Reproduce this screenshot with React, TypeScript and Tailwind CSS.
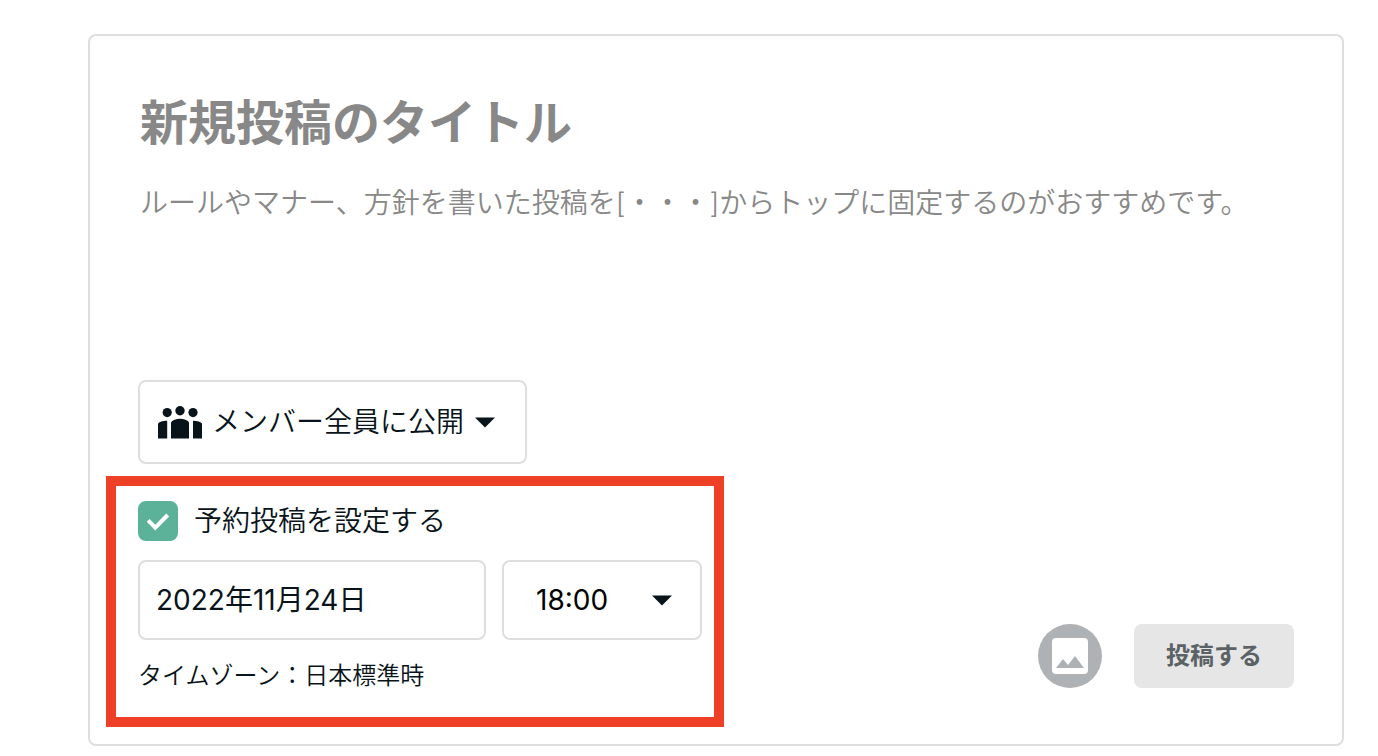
import React, { useState } from 'react';

const Caret = () => (
  <svg viewBox="0 0 20 11" className="w-5 shrink-0 pointer-events-none" aria-hidden="true">
    <path d="M0 0.5h20L10 10.5z" fill="#08131a" />
  </svg>
);

const MembersIcon = () => (
  <svg viewBox="0 0 44 33" className="w-11 shrink-0" fill="#08131a" aria-hidden="true">
    <circle cx="22" cy="4.7" r="4.7" />
    <circle cx="9.2" cy="6.6" r="4.6" />
    <circle cx="35" cy="6.6" r="4.6" />
    <path d="M13 32.4V16.2C14.5 14 18 12.800 22 12.800s7.500 1.200 9 3.400v16.200z" />
    <path d="M0 32.400V17.600c1-1.900 4.600-2.900 9.200-2.900v17.700z" />
    <path d="M35 32.400V14.700c4.600 0 7.800 1 9 2.900v14.800z" />
  </svg>
);

const ImageIcon = () => (
  <svg viewBox="0 0 36 36" className="w-9" aria-hidden="true">
    <rect width="36" height="36" rx="4" fill="#fff" />
    <path d="M4 30l7-9 5 6 7-9 9 12z" fill="#aeb2b5" />
  </svg>
);

const AudienceSelect = () => (
  <div className="relative self-start flex items-center h-21 border-2 border-[#dedede] rounded-lg">
    <div className="absolute left-4.5 pointer-events-none">
      <MembersIcon />
    </div>
    <select
      aria-label="公開範囲"
      className="h-full appearance-none bg-transparent pl-18 pr-15 outline-none"
    >
      <option>メンバー全員に公開</option>
    </select>
    <div className="absolute right-7.5 pointer-events-none">
      <Caret />
    </div>
  </div>
);

const ScheduleSettings = () => {
  const [scheduled, setScheduled] = useState(true);
  const [date, setDate] = useState('2022年11月24日');

  return (
    <div className="-ml-8 border-10 border-[#ed4027] pl-5.5 pr-3 pt-[15px] pb-[21px]">
      <label className="flex items-center gap-4 leading-10">
        <span className="relative flex size-10">
          <input
            type="checkbox"
            checked={scheduled}
            onChange={(e) => setScheduled(e.target.checked)}
            className="peer size-10 appearance-none rounded-lg border-2 border-[#dedede] checked:border-[#5bb299] checked:bg-[#5bb299]"
          />
          <svg
            viewBox="0 0 40 40"
            className="absolute inset-0 hidden pointer-events-none peer-checked:block"
            fill="none"
            stroke="#fff"
            strokeWidth="4"
            aria-hidden="true"
          >
            <path d="M10.200 19.400l7.100 7.200L29.700 14" />
          </svg>
        </span>
        <span>予約投稿を設定する</span>
      </label>
      <div className="flex gap-4 mt-[19px]">
        <input
          type="text"
          aria-label="投稿日"
          value={date}
          onChange={(e) => setDate(e.target.value)}
          className="w-87 h-20 px-4 pb-1 border-2 border-[#dedede] rounded-lg font-normal outline-none"
        />
        <div className="relative flex items-center w-50 h-20 border-2 border-[#dedede] rounded-lg">
          <select
            aria-label="投稿時刻"
            className="w-full h-full appearance-none bg-transparent pl-8 font-normal text-black outline-none"
          >
            <option>18:00</option>
          </select>
          <div className="absolute right-7 pointer-events-none">
            <Caret />
          </div>
        </div>
      </div>
      <p className="mt-4 text-2xl leading-10">タイムゾーン：日本標準時</p>
    </div>
  );
};

const App = () => {
  return (
    <main className="min-h-screen bg-white pt-[34px] pr-[34px] pb-2 pl-22 font-['Inter','Noto_Sans_CJK_JP',sans-serif] text-[28px] font-[350] text-[#08131a]">
      <form className="flex flex-col border-2 border-[#dedede] rounded-lg px-12 pt-12 pb-[17px]">
        <input
          type="text"
          aria-label="タイトル"
          placeholder="新規投稿のタイトル"
          className="h-19 px-0.5 text-5xl font-bold placeholder:text-[#888] outline-none"
        />
        <textarea
          aria-label="本文"
          placeholder="ルールやマナー、方針を書いた投稿を[・・・]からトップに固定するのがおすすめです。"
          className="h-50 mt-5 px-0.5 leading-[46px] resize-none placeholder:text-[#888] outline-none"
        />
        <AudienceSelect />
        <div className="flex items-end justify-between mt-3">
          <ScheduleSettings />
          <div className="flex items-center gap-8 mb-[39px]">
            <button
              type="button"
              aria-label="画像を追加"
              className="flex items-center justify-center size-16 rounded-full bg-[#aeb2b5]"
            >
              <ImageIcon />
            </button>
            <button
              type="submit"
              className="h-16 px-8 rounded-lg bg-[#e6e6e6] text-2xl font-bold text-[#5a6265]"
            >
              投稿する
            </button>
          </div>
        </div>
      </form>
    </main>
  );
};

export default App;
